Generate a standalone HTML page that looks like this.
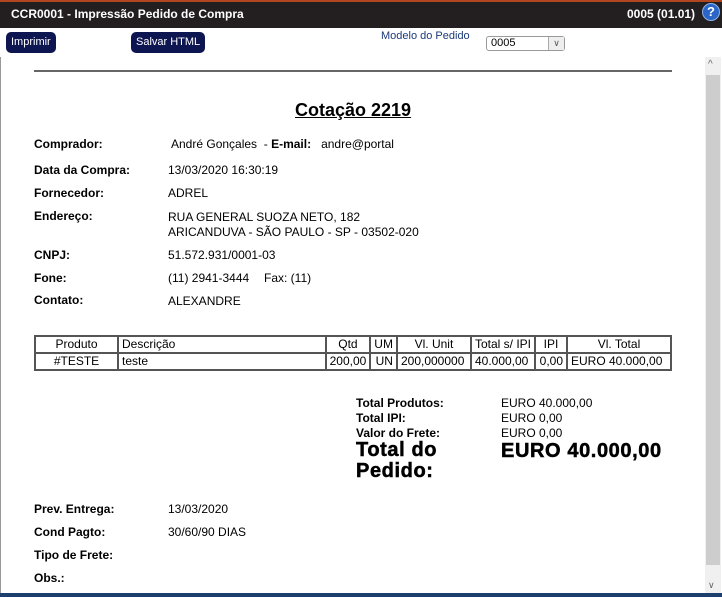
<!DOCTYPE html>
<html><head><meta charset="utf-8"><style>
*{margin:0;padding:0;box-sizing:border-box}
body{width:722px;height:597px;position:relative;overflow:hidden;background:#fff;font-family:"Liberation Sans",Arial,sans-serif;font-size:12px;color:#000}
.a{position:absolute;white-space:nowrap}
.top{left:0;top:0;width:722px;height:28px;background:#231f20;border-top:2px solid #b0451e}
.btn{background:#0d1650;color:#fff;border-radius:5px;font-size:11px;height:21px;line-height:21px;padding:0 5px;font-family:"Liberation Sans Narrow","Liberation Sans",sans-serif}
.lb{font-weight:bold;font-family:"Liberation Sans Narrow","Liberation Sans",sans-serif;font-size:12px}
table{border-collapse:separate;border-spacing:0;border:1px solid #555;font-family:"Liberation Sans Narrow","Liberation Sans",sans-serif;font-size:12px}
td{border:1px solid #555;padding:0 3px;height:17px;line-height:15px}
.big{font-size:20px;font-weight:bold;letter-spacing:0.6px;-webkit-text-stroke:0.5px #000}
</style></head><body>
<div class="a top"></div>
<div class="a" style="left:11px;top:7px;color:#fff;font-weight:bold;font-size:12px">CCR0001 - Impressão Pedido de Compra</div>
<div class="a" style="left:627px;top:7px;color:#fff;font-weight:bold;font-size:12px">0005 (01.01)</div>
<div class="a" style="left:702px;top:3px;width:18px;height:18px;border-radius:50%;background:#2b66c6;border:1px solid #8fb3ea;color:#fff;font-weight:bold;font-size:13px;text-align:center;line-height:16px">?</div>
<div class="a btn" style="left:6px;top:32px">Imprimir</div>
<div class="a btn" style="left:131px;top:32px">Salvar HTML</div>
<div class="a" style="left:381px;top:30px;color:#1c3a7a;font-size:11px">Modelo do Pedido</div>
<div class="a" style="left:486px;top:36px;width:79px;height:15px;border:1px solid #999;border-radius:3px;font-size:11px;line-height:13px;padding-left:4px">0005<span style="position:absolute;right:0;top:0;width:16px;height:13px;border-left:1px solid #aaa;background:#eee;text-align:center;font-size:9px;color:#555">&#8744;</span></div>
<div class="a" style="left:0;top:57px;width:1px;height:536px;background:#999"></div>
<div class="a" style="left:705px;top:57px;width:16px;height:536px;background:#f0f0f0"></div>
<div class="a" style="left:706px;top:75px;width:14px;height:490px;background:#cdcdcd"></div>
<div class="a" style="left:708px;top:59px;font-size:10px;color:#666">^</div>
<div class="a" style="left:708px;top:580px;font-size:9px;color:#666">&#8744;</div>
<div class="a" style="left:0;top:593px;width:722px;height:4px;background:#1d3f6e"></div>
<div class="a" style="left:34px;top:70px;width:638px;height:2px;background:#666"></div>
<div class="a" style="left:295px;top:100px;font-size:18px;font-weight:bold;text-decoration:underline">Cotação 2219</div>
<div class="a lb" style="left:34px;top:137px">Comprador:</div>
<div class="a" style="left:171px;top:137px">André Gonçales &nbsp;- <b>E-mail:</b> &nbsp;&nbsp;andre@portal</div>
<div class="a lb" style="left:34px;top:163px">Data da Compra:</div><div class="a" style="left:168px;top:163px">13/03/2020 16:30:19</div>
<div class="a lb" style="left:34px;top:186px">Fornecedor:</div><div class="a" style="left:168px;top:186px">ADREL</div>
<div class="a lb" style="left:34px;top:209px">Endereço:</div><div class="a" style="left:168px;top:210px">RUA GENERAL SUOZA NETO, 182</div>
<div class="a" style="left:168px;top:225px">ARICANDUVA - SÃO PAULO - SP - 03502-020</div>
<div class="a lb" style="left:34px;top:248px">CNPJ:</div><div class="a" style="left:168px;top:248px">51.572.931/0001-03</div>
<div class="a lb" style="left:34px;top:271px">Fone:</div><div class="a" style="left:168px;top:271px">(11) 2941-3444</div><div class="a" style="left:264px;top:271px">Fax: (11)</div>
<div class="a lb" style="left:34px;top:293px">Contato:</div><div class="a" style="left:168px;top:294px">ALEXANDRE</div>
<table class="a" style="left:34px;top:335px;width:638px">
<tr><td style="width:83px;text-align:center">Produto</td><td>Descrição</td><td style="width:43px;text-align:center">Qtd</td><td style="width:26px;text-align:center">UM</td><td style="width:74px;text-align:center">Vl. Unit</td><td style="width:63px;text-align:center">Total s/ IPI</td><td style="width:32px;text-align:center">IPI</td><td style="width:104px;text-align:center">Vl. Total</td></tr>
<tr><td style="text-align:center">#TESTE</td><td>teste</td><td style="text-align:right">200,00</td><td style="text-align:right">UN</td><td>200,000000</td><td>40.000,00</td><td style="text-align:right">0,00</td><td>EURO 40.000,00</td></tr>
</table>
<div class="a lb" style="left:356px;top:396px;line-height:15px">Total Produtos:<br>Total IPI:<br>Valor do Frete:</div>
<div class="a" style="left:501px;top:396px;line-height:15px">EURO 40.000,00<br>EURO 0,00<br>EURO 0,00</div>
<div class="a big" style="left:356px;top:440px;line-height:21px">Total do<br>Pedido:</div>
<div class="a big" style="left:501px;top:440px">EURO 40.000,00</div>
<div class="a lb" style="left:34px;top:502px">Prev. Entrega:</div><div class="a" style="left:168px;top:502px">13/03/2020</div>
<div class="a lb" style="left:34px;top:525px">Cond Pagto:</div><div class="a" style="left:168px;top:525px">30/60/90 DIAS</div>
<div class="a lb" style="left:34px;top:548px">Tipo de Frete:</div>
<div class="a lb" style="left:34px;top:571px">Obs.:</div>
</body></html>
